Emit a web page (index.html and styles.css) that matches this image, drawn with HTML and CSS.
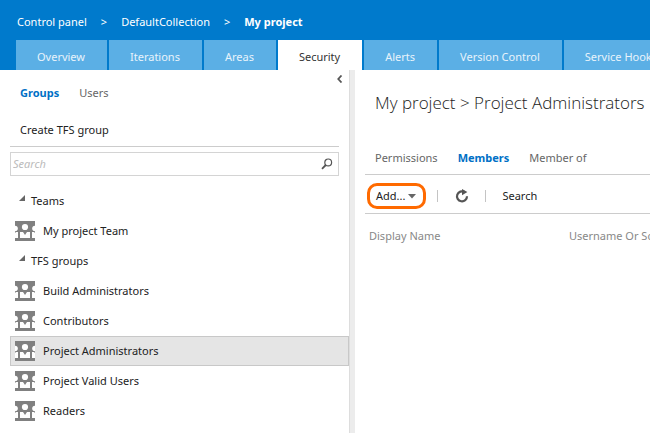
FILE: index.html
```html
<!DOCTYPE html>
<html lang="en">
<head>
<meta charset="utf-8">
<title>Control panel - My project</title>
<link rel="stylesheet" href="styles.css">
</head>
<body>
<svg class="defs" aria-hidden="true">
  <symbol id="group" viewBox="0 0 20 20">
    <path fill="#808080" d="M0 0h20v20H0z"/>
    <g fill="#fff">
      <circle cx="10" cy="6" r="3.1"/>
      <circle cx="0" cy="7.5" r="2.8"/>
      <circle cx="20" cy="7.5" r="2.8"/>
      <path d="M5 11h3l2 3 2-3h3v6H5zM0 12l1-1h2v6H0zM20 12l-1-1h-2v6h3z"/>
    </g>
  </symbol>
</svg>
<header class="header">
  <nav class="crumbs" aria-label="Breadcrumb">
    <a href="#">Control panel</a><span>&gt;</span><a href="#">DefaultCollection</a><span>&gt;</span><a href="#" class="current">My project</a>
  </nav>
  <nav class="tabs" aria-label="Administration">
    <a href="#">Overview</a>
    <a href="#">Iterations</a>
    <a href="#">Areas</a>
    <a href="#" class="active">Security</a>
    <a href="#">Alerts</a>
    <a href="#">Version Control</a>
    <a href="#">Service Hooks</a>
  </nav>
</header>
<main class="main">
  <aside class="side">
    <div class="side-top">
      <nav class="pivot" aria-label="Identities">
        <a href="#" class="active">Groups</a>
        <a href="#">Users</a>
      </nav>
      <button class="collapse" type="button" aria-label="Collapse pane">
        <svg width="6" height="8" viewBox="0 0 6 8"><path d="M4.5 .5 1.3 4l3.2 3.5" fill="none" stroke="#555" stroke-width="1.8"/></svg>
      </button>
    </div>
    <div class="create"><button type="button">Create TFS group</button></div>
    <form class="search">
      <input type="text" placeholder="Search" aria-label="Search">
      <button type="submit" aria-label="Find">
        <svg width="12" height="12" viewBox="0 0 12 12" fill="none" stroke="#555"><circle cx="7.2" cy="4.4" r="3.4" stroke-width="1.2"/><path d="M4.8 7 1 10.8" stroke-width="1.8"/></svg>
      </button>
    </form>
    <ul class="tree">
      <li class="heading"><svg width="6" height="6" viewBox="0 0 6 6"><path d="M6 0v6H0z" fill="#666"/></svg>Teams</li>
      <li><a href="#"><svg class="icon"><use href="#group"/></svg>My project Team</a></li>
      <li class="heading"><svg width="6" height="6" viewBox="0 0 6 6"><path d="M6 0v6H0z" fill="#666"/></svg>TFS groups</li>
      <li><a href="#"><svg class="icon"><use href="#group"/></svg>Build Administrators</a></li>
      <li><a href="#"><svg class="icon"><use href="#group"/></svg>Contributors</a></li>
      <li><a href="#" class="selected"><svg class="icon"><use href="#group"/></svg>Project Administrators</a></li>
      <li><a href="#"><svg class="icon"><use href="#group"/></svg>Project Valid Users</a></li>
      <li><a href="#"><svg class="icon"><use href="#group"/></svg>Readers</a></li>
    </ul>
  </aside>
  <div class="splitter"></div>
  <section class="content">
    <h1>My project &gt; Project Administrators</h1>
    <nav class="pivot detail" aria-label="Group details">
      <a href="#">Permissions</a>
      <a href="#" class="active">Members</a>
      <a href="#">Member of</a>
    </nav>
    <div class="toolbar">
      <button class="add" type="button">Add...<svg width="8" height="5" viewBox="0 0 8 5"><path d="M0 0h8L4 4.5z" fill="#666"/></svg></button>
      <span class="bar"></span>
      <button type="button" aria-label="Refresh">
        <svg width="14" height="14" viewBox="0 0 14 14"><path d="M9.5 3A5 5 0 1 0 12 7.3" fill="none" stroke="#555" stroke-width="2.2"/><path d="M7 0v6.2L12.4 3z" fill="#555"/></svg>
      </button>
      <span class="bar"></span>
      <button type="button">Search</button>
    </div>
    <table class="members">
      <thead><tr><th scope="col">Display Name</th><th scope="col">Username Or Scope</th></tr></thead>
    </table>
  </section>
</main>
</body>
</html>
```
FILE: styles.css
```css
* { box-sizing: border-box; }

body {
  margin: 0;
  min-height: 100vh;
  display: flex;
  flex-direction: column;
  overflow: hidden;
  background: #fff;
  color: #222;
  font: 11px/18px "Segoe UI", "Noto Sans", sans-serif;
}

a { color: inherit; text-decoration: none; }
button, input { font: inherit; color: inherit; }
button { padding: 0; border: 0; background: none; display: flex; align-items: center; }
svg { display: block; flex: none; }
.defs { position: absolute; width: 0; height: 0; }

.header { background: #007acc; color: #fff; }
.crumbs { display: flex; gap: 14px; height: 40px; padding: 4px 17px 0; align-items: center; white-space: nowrap; }
.current { font-weight: 700; }

.tabs { display: flex; gap: 2px; padding-left: 16px; white-space: nowrap; }
.tabs a { flex: none; padding: 8px 22px 4px 21px; background: #5bafe5; color: #e8f3fb; }
.tabs .active { background: #fff; color: #333; }

.main { flex: 1; display: flex; }
.side { flex: 0 0 349px; padding-left: 10px; }
.side-top { display: flex; justify-content: space-between; padding: 5px 6px 0 10px; }
.pivot { display: flex; gap: 20px; color: #666; white-space: nowrap; }
.pivot .active { color: #0070c6; font-weight: 700; }
.side-top .pivot { padding-top: 9px; }
.collapse { height: 8px; }
.create { margin-right: 10px; padding: 19px 10px 7px; border-bottom: 1px solid #ccc; }
.search { display: flex; align-items: center; height: 24px; margin: 5px 10px 0 0; padding-right: 5px; border: 1px solid #d4d4d4; }
.search input { flex: 1; min-width: 0; padding: 0 2px; border: 0; outline: 0; background: none; }
.search input::placeholder { color: #bbb; font-style: italic; opacity: 1; }

.tree { list-style: none; margin: 10px 0 0; padding: 0; }
.tree .heading { display: flex; align-items: center; gap: 6px; height: 30px; padding-left: 9px; }
.tree .heading svg { margin-bottom: 6px; }
.tree a { display: flex; align-items: center; gap: 8px; height: 30px; padding-left: 4px; border: 1px solid transparent; }
.tree .selected { background: #e5e5e5; border-color: #c8c8c8; }
.icon { width: 20px; height: 20px; }

.splitter { flex: 0 0 6px; background: #ececec; border-left: 1px solid #ddd; }

.content { flex: 1; min-width: 0; padding: 20px 0 0 10px; white-space: nowrap; }
h1 { margin: 0; padding-left: 10px; font: 300 17px/26px "Segoe UI Light", "Open Sans", sans-serif; color: #222; }
.detail { padding: 33px 10px 7px; border-bottom: 1px solid #ccc; }
.toolbar { display: flex; align-items: center; height: 39px; padding: 4px 0 0 2px; border-bottom: 1px solid #ccc; }
.add { gap: 3px; height: 26px; padding: 0 7px 0 6px; border: 3px solid #ff6a00; border-radius: 10px; }
.bar { width: 1px; height: 12px; margin: 0 17px 0 11px; background: #c4c4c4; }
.bar + button + .bar { margin: 0 16px; }
.members { width: 100%; table-layout: fixed; border-collapse: collapse; margin-top: 13px; }
.members th { padding: 0 4px; font-weight: 400; text-align: left; color: #888; overflow: hidden; }
.members th:first-child { width: 200px; }
.members th:last-child { padding-right: 0; }
```
